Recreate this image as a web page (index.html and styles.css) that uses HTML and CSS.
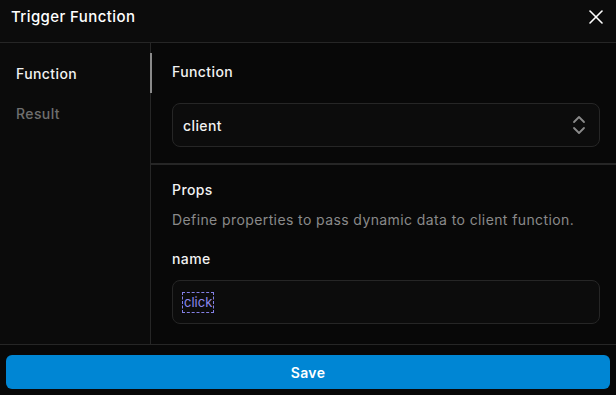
FILE: index.html
```html
<!DOCTYPE html>
<html>
<head>
<meta charset="utf-8">
<link rel="stylesheet" href="styles.css">
</head>
<body>
<div class="dialog">
  <div class="header">
    <div class="title">Trigger Function</div>
    <svg class="close" width="24" height="24" viewBox="0 0 24 24" fill="none" stroke="#fff" stroke-width="1.6" stroke-linecap="round"><path d="M18 6 6 18"/><path d="m6 6 12 12"/></svg>
  </div>
  <div class="body">
    <div class="sidebar">
      <div class="nav-item active">Function</div>
      <div class="nav-item">Result</div>
    </div>
    <div class="main">
      <div class="section first">
        <div class="label">Function</div>
        <div class="select">
          <span class="value">client</span>
          <svg width="24" height="24" viewBox="0 0 24 24" fill="none" stroke="#8a8a8a" stroke-width="1.8" stroke-linecap="round" stroke-linejoin="round"><path d="m7 15 5 5 5-5"/><path d="m7 9 5-5 5 5"/></svg>
        </div>
      </div>
      <div class="section props">
        <div class="label">Props</div>
        <div class="desc">Define properties to pass dynamic data to client function.</div>
        <div class="label name">name</div>
        <div class="input"><span class="chip">click</span></div>
      </div>
    </div>
  </div>
  <div class="footer">
    <button class="save">Save</button>
  </div>
</div>
</body>
</html>
```

FILE: styles.css
```css
* { box-sizing: border-box; }
html, body { margin: 0; padding: 0; }
body {
  background: #080808;
  font-family: Inter, "Noto Sans", sans-serif;
  letter-spacing: 0.4px;
  color: #f2f2f2;
  width: 616px;
  height: 395px;
  overflow: hidden;
}
.dialog {
  display: flex;
  flex-direction: column;
  height: 395px;
}
.header {
  height: 43px;
  flex: none;
  background: #0c0c0c;
  border-bottom: 1px solid #262626;
  display: flex;
  justify-content: space-between;
  align-items: flex-start;
  padding: 7px 8px 0 11px;
}
.title {
  font-size: 15px;
  line-height: 20px;
  font-weight: 500;
  color: #fff;
}
.close { margin-top: -2px; }
.body {
  flex: 1;
  display: flex;
  min-height: 0;
}
.sidebar {
  width: 150px;
  flex: none;
  background: #0b0b0b;
  padding-top: 10px;
}
.nav-item {
  height: 40px;
  display: flex;
  align-items: center;
  padding-left: 16px;
  font-size: 14px;
  font-weight: 500;
  color: #6f6f6f;
  position: relative;
}
.nav-item.active { color: #f2f2f2; }
.nav-item.active::after {
  content: "";
  position: absolute;
  right: -2px;
  top: 0;
  width: 2px;
  height: 40px;
  background: #8a8a8a;
}
.main {
  flex: 1;
  border-left: 1px solid #262626;
  display: flex;
  flex-direction: column;
}
.section {
  padding: 0 16px 0 21px;
}
.section.first {
  padding-top: 19px;
  padding-bottom: 16px;
  border-bottom: 2px solid #262626;
}
.label {
  font-size: 14px;
  line-height: 20px;
  font-weight: 500;
  color: #f2f2f2;
}
.select {
  margin-top: 21px;
  height: 44px;
  border: 1px solid #262626;
  border-radius: 8px;
  background: #0c0c0c;
  display: flex;
  align-items: center;
  justify-content: space-between;
  padding: 0 8px 0 10px;
}
.value {
  font-size: 14px;
  font-weight: 500;
  color: #f2f2f2;
}
.props { padding-top: 15px; }
.desc {
  margin-top: 10px;
  font-size: 14px;
  line-height: 20px;
  color: #8a8a8a;
}
.label.name { margin-top: 19px; }
.input {
  margin-top: 11px;
  height: 44px;
  border: 1px solid #262626;
  border-radius: 8px;
  background: #0c0c0c;
  display: flex;
  align-items: center;
  padding-left: 9px;
}
.chip {
  border: 1px dashed #8480e6;
  color: #8c88ee;
  font-size: 13px;
  letter-spacing: 0;
  line-height: 19px;
  padding: 0 1px;
}
.footer {
  flex: none;
  border-top: 1px solid #262626;
  padding: 10px 6px 6px;
  background: #080808;
}
.save {
  display: block;
  width: 100%;
  height: 34px;
  border: none;
  border-radius: 6px;
  background: #0086d4;
  color: #fff;
  font-family: Inter, "Noto Sans", sans-serif;
  letter-spacing: 0.4px;
  font-size: 14px;
  font-weight: 600;
}
```
